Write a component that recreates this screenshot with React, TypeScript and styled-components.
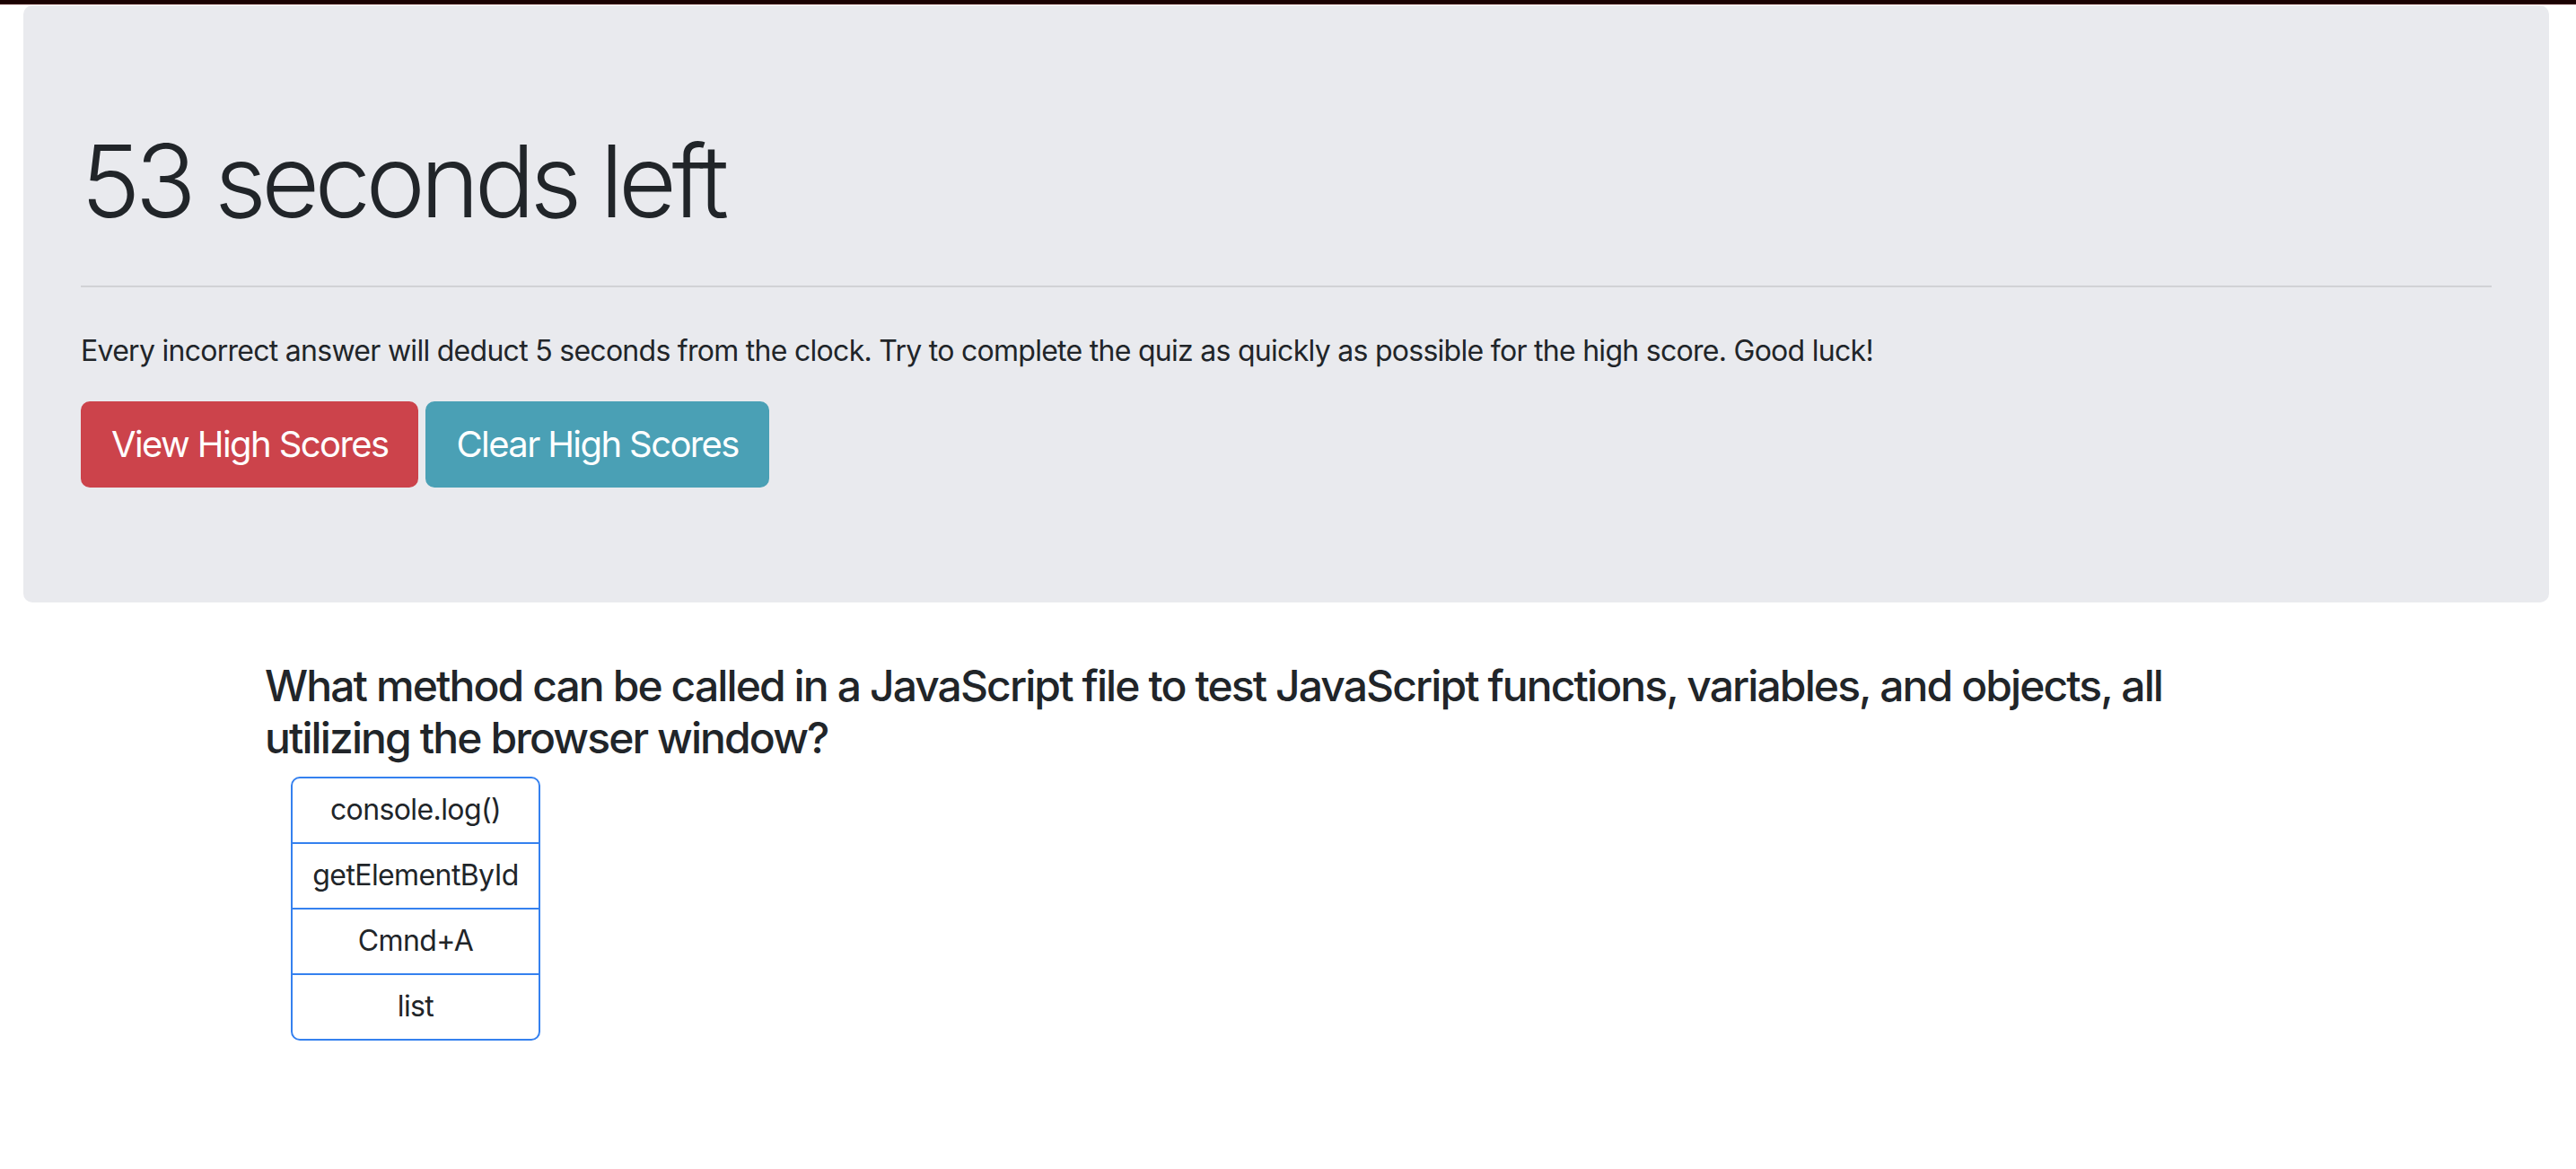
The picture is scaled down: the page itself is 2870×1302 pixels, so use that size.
import React from "react";
import styled, { createGlobalStyle } from "styled-components";

const GlobalStyle = createGlobalStyle`
  html, body {
    margin: 0;
    padding: 0;
    background: #ffffff;
  }
  body {
    font-family: Inter, "Noto Sans", "Liberation Sans", sans-serif;
    color: #212529;
    -webkit-font-smoothing: antialiased;
  }
  * { box-sizing: border-box; }
`;

const TopBar = styled.div`
  height: 5px;
  background: #1a0202;
  border-bottom: 1px solid #3a0606;
`;

const Jumbotron = styled.section`
  margin: 1px 30px 64px 26px;
  padding: 128px 64px;
  background: #e9eaee;
  border-radius: 10px;
`;

const Title = styled.h1`
  margin: 0 0 16px;
  font-size: 112px;
  font-weight: 300;
  line-height: 1.2;
  letter-spacing: -5.6px;
`;

const Divider = styled.hr`
  margin: 50px 0 47px;
  border: 0;
  border-top: 2px solid rgba(0, 0, 0, 0.1);
`;

const Intro = styled.p`
  margin: 0 0 32px;
  font-size: 32px;
  line-height: 48px;
  font-weight: 400;
  letter-spacing: -0.72px;
`;

const ButtonRow = styled.div`
  display: flex;
  gap: 8px;
`;

const ActionButton = styled.button<{ $variant: "danger" | "info" }>`
  padding: 16px 32px;
  font-family: inherit;
  font-size: 40px;
  line-height: 60px;
  font-weight: 400;
  letter-spacing: -1.6px;
  color: #ffffff;
  border-radius: 10px;
  border: 2px solid ${(p) => (p.$variant === "danger" ? "#cc434b" : "#4aa0b5")};
  background: ${(p) => (p.$variant === "danger" ? "#cc434b" : "#4aa0b5")};
  cursor: pointer;
`;

const QuizSection = styled.main`
  max-width: 2280px;
  margin: 0 auto;
`;

const Question = styled.h4`
  margin: 0 0 14px;
  font-size: 48px;
  font-weight: 500;
  line-height: 1.2;
  letter-spacing: -1.9px;
`;

const AnswerList = styled.div`
  display: flex;
  flex-direction: column;
  width: 278px;
  margin-left: 29px;
  border: 2px solid #3581ef;
  border-radius: 10px;
  overflow: hidden;
`;

const AnswerItem = styled.div`
  padding: 11.5px 0;
  font-size: 32px;
  line-height: 48px;
  letter-spacing: -0.6px;
  text-align: center;
  & + & {
    border-top: 2px solid #3581ef;
  }
`;

const answers = ["console.log()", "getElementById", "Cmnd+A", "list"];

export default function App() {
  return (
    <>
      <GlobalStyle />
      <TopBar />
      <Jumbotron>
        <Title>53 seconds left</Title>
        <Divider />
        <Intro>
          Every incorrect answer will deduct 5 seconds from the clock. Try to complete the quiz as quickly as
          possible for the high score. Good luck!
        </Intro>
        <ButtonRow>
          <ActionButton $variant="danger">View High Scores</ActionButton>
          <ActionButton $variant="info">Clear High Scores</ActionButton>
        </ButtonRow>
      </Jumbotron>
      <QuizSection>
        <Question>
          What method can be called in a JavaScript file to test JavaScript functions, variables, and objects, all
          utilizing the browser window?
        </Question>
        <AnswerList>
          {answers.map((a) => (
            <AnswerItem key={a}>{a}</AnswerItem>
          ))}
        </AnswerList>
      </QuizSection>
    </>
  );
}
